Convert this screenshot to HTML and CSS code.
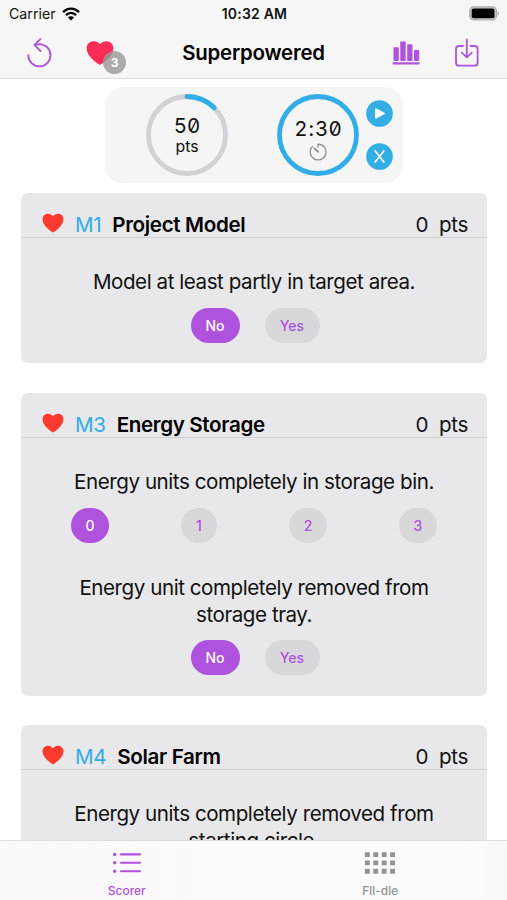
FILE: index.html
```html
<!DOCTYPE html>
<html lang="en">
<head>
<meta charset="utf-8">
<title>Superpowered</title>
<link rel="stylesheet" href="styles.css">
</head>
<body>
<svg class="defs" aria-hidden="true"><symbol id="heart" viewBox="0 0 22 20"><path d="M11 19.5C9.5 18.6 .5 13.2 .5 6.3C.5 3 2.8.7 5.8.7C8.2.7 10 1.6 11 3.2C12 1.6 13.8.7 16.2.7C19.2.7 21.5 3 21.5 6.3C21.5 13.2 12.5 18.6 11 19.5Z" fill="currentColor"/></symbol></svg>
<div class="app">
  <header class="top">
    <div class="status">
      <div class="carrier"><span>Carrier</span>
        <svg width="18" height="14" viewBox="0 0 18 14"><g fill="none" stroke="#000" stroke-width="2.4"><path d="M1 5.1C5.5.4 12.5.4 17 5.1"/><path d="M3.9 8.2C6.9 5.2 11.1 5.2 14.1 8.2"/></g><path d="M9 13.6L5.9 10.4C7.6 8.8 10.4 8.8 12.1 10.4Z"/></svg>
      </div>
      <span class="clock">10:32 AM</span>
      <svg class="battery" width="31" height="15" viewBox="0 0 31 15"><rect x=".8" y=".8" width="26.6" height="13.2" rx="4" fill="#ccc" stroke="#aaa" stroke-width="1.2"/><rect x="2.7" y="2.6" width="22.8" height="9.6" rx="2" fill="#000"/><path d="M28.6 5v5c1.8-.5 1.8-4.5 0-5z" fill="#aaa"/></svg>
    </div>
    <div class="nav">
      <div class="nav-left">
        <svg width="26" height="30" viewBox="0 0 26 30" fill="none" stroke="#af52de" stroke-width="1.8" stroke-linecap="round" stroke-linejoin="round"><path d="M2.3 17.2A11.1 11.1 0 1 0 13.4 6.1L8.7 6.8"/><path d="M14.5 1.1L8.5 6.8L14.5 13"/></svg>
        <span class="likes"><svg width="28" height="26"><use href="#heart"/></svg><b class="badge">3</b></span>
      </div>
      <h1>Superpowered</h1>
      <div class="nav-right">
        <svg width="28" height="24" viewBox="0 0 28 24" fill="#af52de"><rect x="1.5" y="6.2" width="5.3" height="13.8" rx=".8"/><rect x="8.3" y=".4" width="5.4" height="19.6" rx=".8"/><rect x="15.2" y="3.3" width="5.3" height="16.7" rx=".8"/><rect x="22" y="9" width="5.2" height="11" rx=".8"/><rect x=".6" y="21.2" width="27" height="2.2" rx=".6"/></svg>
        <svg width="26" height="30" viewBox="0 0 26 30" fill="none" stroke="#af52de" stroke-width="1.8" stroke-linecap="round" stroke-linejoin="round"><path d="M9 8H5Q2 8 2 11V24.7Q2 27.7 5 27.7H20.6Q23.6 27.7 23.6 24.7V11Q23.6 8 20.6 8H16.6M12.8 1.5V19M7.8 14.7L12.8 19.3L17.8 14.7"/></svg>
      </div>
    </div>
  </header>
  <main>
    <section class="meter">
      <div class="dial">
        <svg width="82" height="82" viewBox="0 0 82 82" fill="none" stroke-width="4.8"><circle cx="41" cy="41" r="38.5" stroke="#d1d1d6"/><path d="M41 2.5A38.5 38.5 0 0 1 68.2 13.8" stroke="#32ade6" stroke-linecap="round"/></svg>
        <div class="dial-text"><span class="mono">50</span><span class="unit">pts</span></div>
      </div>
      <div class="dial">
        <svg width="82" height="82" viewBox="0 0 82 82" fill="none" stroke-width="4.8"><circle cx="41" cy="41" r="38.5" stroke="#32ade6"/></svg>
        <div class="dial-text timer"><span class="mono">2<span class="colon">:</span>30</span>
          <svg width="18" height="18" viewBox="0 0 18 18" fill="none" stroke="#8e8e93" stroke-width="1.3" stroke-linecap="round"><path d="M9 4V1.1A7.9 7.9 0 1 1 3.5 3.4"/><path d="M5.4 5.4L9.1 8.8" stroke-width="1.9"/></svg>
        </div>
      </div>
      <div class="controls">
        <svg width="27" height="27" viewBox="0 0 27 27"><circle cx="13.5" cy="13.5" r="13.3" fill="#32ade6"/><path d="M9.7 8.7V18.3L18.8 13.5Z" fill="#fff" stroke="#fff" stroke-linejoin="round"/></svg>
        <svg width="27" height="27" viewBox="0 0 27 27"><circle cx="13.5" cy="13.5" r="13.3" fill="#32ade6"/><path d="M9.2 8L17.8 19M17.8 8L9.2 19" stroke="#fff" stroke-width="1.8" stroke-linecap="round"/></svg>
      </div>
    </section>
    <section class="card">
      <h2><svg width="22" height="20"><use href="#heart"/></svg><span class="code">M1</span><span class="name">Project Model</span><span class="pts">0&nbsp; pts</span></h2>
      <p>Model at least partly in target area.</p>
      <div class="choice"><span class="pill on">No</span><span class="pill yes">Yes</span></div>
    </section>
    <section class="card">
      <h2><svg width="22" height="20"><use href="#heart"/></svg><span class="code">M3</span><span class="name">Energy Storage</span><span class="pts">0&nbsp; pts</span></h2>
      <p>Energy units completely in storage bin.</p>
      <div class="numbers"><span class="pill on">0</span><span class="pill one">1</span><span class="pill">2</span><span class="pill">3</span></div>
      <p class="second">Energy unit completely removed from<br>storage tray.</p>
      <div class="choice"><span class="pill on">No</span><span class="pill yes">Yes</span></div>
    </section>
    <section class="card">
      <h2><svg width="22" height="20"><use href="#heart"/></svg><span class="code">M4</span><span class="name">Solar Farm</span><span class="pts">0&nbsp; pts</span></h2>
      <p>Energy units completely removed from<br>starting circle.</p>
    </section>
  </main>
  <footer>
    <div class="tab active">
      <svg width="30" height="22" viewBox="0 0 30 22" fill="none" stroke="currentColor" stroke-width="2.1" stroke-linecap="round"><path d="M9 2.4H28M9 10.8H28M9 19.2H28"/><path d="M2.7 2.4h.01M2.7 10.8h.01M2.7 19.2h.01" stroke-width="3.5"/></svg>
      <span>Scorer</span>
    </div>
    <div class="tab">
      <svg width="32" height="22" viewBox="0 0 32 22" fill="none" stroke="currentColor" stroke-width="4.9" stroke-dasharray="4.9 3.5"><path d="M.9 2.6H31.2M.9 10.9H31.2M.9 19.2H31.2"/></svg>
      <span>Fll-dle</span>
    </div>
  </footer>
</div>
</body>
</html>
```
FILE: styles.css
```css
* { box-sizing: border-box; }
body { margin: 0; background: #fff; color: #111; font-family: Inter, "Liberation Sans", sans-serif; }
svg { display: block; flex: none; }
.defs { display: none; }
.app { width: 507px; height: 900px; display: flex; flex-direction: column; overflow: hidden; }
.top { flex: none; height: 79px; background: #f6f6f6; border-bottom: 1px solid #dedede; }
.status { height: 27px; display: grid; grid-template-columns: 1fr auto 1fr; align-items: center; padding: 0 7px 0 9px; font-size: 14.2px; color: #111; }
.carrier { display: flex; gap: 6px; align-items: center; }
.clock { font-weight: 600; font-size: 14px; letter-spacing: .2px; }
.battery { justify-self: end; }
.nav { height: 51px; display: grid; grid-template-columns: 1fr auto 1fr; align-items: center; padding: 0 26px; }
.nav-left { display: flex; align-items: center; gap: 34px; height: 31px; }
.likes { position: relative; color: #ff2d55; }
.badge { position: absolute; left: 17px; top: 11px; width: 23px; height: 23px; border-radius: 50%; background: #999c; color: #fff; font-size: 12px; line-height: 23px; text-align: center; }
h1 { margin: 0; font-size: 20.4px; letter-spacing: -.2px; font-weight: 600; color: #000; }
.nav-right { display: flex; align-items: center; justify-content: flex-end; gap: 34px; margin-right: 1px; }
main { flex: 1; min-height: 0; overflow: hidden; padding: 8px 20px 0 21px; }
.meter { width: 298px; height: 96px; margin: 0 auto 10px 84px; border-radius: 18px; background: #f5f5f5; display: flex; align-items: center; padding-left: 41px; }
.dial { display: grid; margin-right: 49px; }
.dial > * { grid-area: 1 / 1; }
.dial-text { display: flex; flex-direction: column; align-items: center; padding-top: 20px; }
.mono { font-size: 20.5px; line-height: 24px; font-feature-settings: "zero", "tnum", "calt" 0; }
.colon { padding: 0 1px; }
.unit { font-size: 15.8px; line-height: 18px; }
.timer { padding-top: 23px; gap: 2px; }
.dial + .dial { margin-right: 7px; }
.controls { display: flex; flex-direction: column; gap: 16px; }
.card { height: 170px; margin-bottom: 30px; border-radius: 7px; background: #e8e8ea; }
.card:nth-of-type(3) { height: 303px; margin-bottom: 29px; }
.card:nth-of-type(4) { height: 220px; }
h2 { margin: 0; height: 45px; border-bottom: 1px solid #d0d0d3; display: flex; align-items: flex-end; padding: 0 19px 0 21px; font-size: 20.6px; line-height: 24px; font-weight: 400; letter-spacing: -.35px; }
h2 svg { color: #ff3b30; margin: 0 11px 4px 0; }
.code { color: #32ade6; }
.name { font-weight: 600; color: #000; margin-left: 11px; }
.pts { margin-left: auto; }
p { margin: 0; padding-top: 30px; text-align: center; font-size: 20.6px; line-height: 27px; letter-spacing: -.45px; white-space: nowrap; }
.choice { display: flex; justify-content: center; gap: 25px; margin: 13px 0 0 2px; }
.pill { width: 38px; height: 35px; border-radius: 18px; background: #d8d8da; color: #af52de; font-size: 14px; font-weight: 450; display: grid; place-items: center; }
.pill.on { background: #af52de; color: #fff; }
.choice .pill { width: 49px; }
.choice .yes { width: 55px; }
.numbers { display: flex; justify-content: space-between; margin: 13px 50px 0; }
.pill.one { width: 36px; }
.second { padding-top: 31px; }
.second + .choice { margin-top: 12px; }
footer { flex: none; height: 60px; border-top: 1px solid #dadada; background: linear-gradient(90deg, #fafafa, #fdf7fe 15%, #fcfcfc 40%, #fcfcfc 92%, #f8f8f8); display: grid; grid-template-columns: 1fr 1fr; }
.tab { display: flex; flex-direction: column; align-items: center; padding-top: 11px; gap: 9px; color: #929292; font-size: 12px; line-height: 15px; font-weight: 500; }
.active { color: #af52de; }
```
